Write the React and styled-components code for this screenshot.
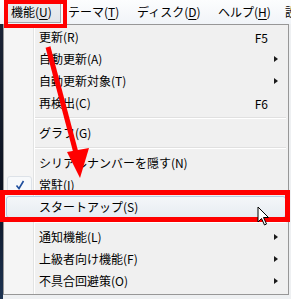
import styled, { createGlobalStyle } from "styled-components";

const GlobalStyle = createGlobalStyle`
  * { box-sizing: border-box; }
  body {
    margin: 0;
    font-family: "Noto Sans CJK JP", "Noto Sans", sans-serif;
    font-size: 12px;
    color: #000;
  }
`;

const Screen = styled.div`
  position: relative;
  width: 291px;
  height: 299px;
  overflow: hidden;
  background: #eef0f2;
`;

const MenuBar = styled.div`
  display: flex;
  height: 24px;
  padding: 2px 0 0 3px;
  background: linear-gradient(#fcfdfe, #f1f4f8);
  white-space: nowrap;
  overflow: hidden;
`;

const BarItem = styled.div`
  flex: none;
  width: ${(p) => p.$w}px;
  height: 21px;
  line-height: 20px;
  padding-left: 7px;
  u { text-decoration: underline; text-underline-offset: 2px; }
`;

const PressedItem = styled(BarItem)`
  margin-left: 4px;
  padding-left: 3px;
  background: linear-gradient(#eceef1, #e2e5e9);
  border: 1px solid #a3a8ae;
  border-top: none;
`;

const Body = styled.div`
  display: flex;
  height: 275px;
`;

const Desktop = styled.div`
  width: 3px;
  background: linear-gradient(#1b2436, #0c1220 60%, #1d3352);
`;

const Panel = styled.div`
  width: 286px;
  height: 271px;
  border: 1px solid #979797;
  padding: 1px 0 2px;
  background: linear-gradient(
    to right,
    #f5f5f5 0 29px,
    #e2e3e3 29px 30px,
    #ffffff 30px 31px,
    #f0f0f0 31px
  );
`;

const Item = styled.div`
  display: grid;
  grid-template-columns: 32px 1fr auto 15px;
  align-items: center;
  height: 22px;
  margin: 0 2px;
  border: 1px solid ${(p) => (p.$hover ? "#b4cbe6" : "transparent")};
  border-radius: 3px;
  background: ${(p) =>
    p.$hover ? "linear-gradient(#f4f6f9, #e7ecf2)" : "transparent"};
  white-space: nowrap;
`;

const Cell = styled.div`
  display: flex;
  align-items: center;
`;

const Label = styled.span`
  line-height: 20px;
`;

const Shortcut = styled.span`
  padding-right: 2px;
`;

const SubArrow = styled.span`
  display: block;
  width: 0;
  height: 0;
  margin-left: 4px;
  border-left: 4px solid #1a1a1a;
  border-top: 3.5px solid transparent;
  border-bottom: 3.5px solid transparent;
`;

const CheckBox = styled.span`
  display: flex;
  align-items: center;
  justify-content: center;
  width: 25px;
  height: 18px;
  border: 1px solid #dde2e8;
  border-radius: 3px;
  background: #f7f9fb;
  color: #1f4f9e;
`;

const Separator = styled.div`
  display: flex;
  align-items: center;
  height: 8px;
  margin: 0 2px 0 31px;
  &::after {
    content: "";
    flex: 1;
    border-top: 1px solid #e0e0e0;
    border-bottom: 1px solid #ffffff;
  }
`;

const RedBox = styled.div`
  position: absolute;
  left: ${(p) => p.$x}px;
  top: ${(p) => p.$y}px;
  width: ${(p) => p.$w}px;
  height: ${(p) => p.$h}px;
  border: ${(p) => p.$t}px solid #ff0000;
`;

const Overlay = styled.svg`
  position: absolute;
  left: 0;
  top: 0;
  pointer-events: none;
`;

const Cursor = styled.svg`
  position: absolute;
  left: 257px;
  top: 206px;
`;

const items = [
  { label: "更新(R)", key: "F5" },
  { label: "自動更新(A)", sub: true },
  { label: "自動更新対象(T)", sub: true },
  { label: "再検出(C)", key: "F6" },
  { sep: true },
  { label: "グラフ(G)" },
  { sep: true },
  { label: "シリアルナンバーを隠す(N)" },
  { label: "常駐(I)", checked: true },
  { label: "スタートアップ(S)", hover: true },
  { sep: true },
  { label: "通知機能(L)", sub: true },
  { label: "上級者向け機能(F)", sub: true },
  { label: "不具合回避策(O)", sub: true },
];

function App() {
  return (
    <Screen>
      <GlobalStyle />
      <MenuBar>
        <PressedItem $w={54}>
          機能(<u>U</u>)
        </PressedItem>
        <BarItem $w={69}>
          テーマ(<u>T</u>)
        </BarItem>
        <BarItem $w={81}>
          ディスク(<u>D</u>)
        </BarItem>
        <BarItem $w={67}>
          ヘルプ(<u>H</u>)
        </BarItem>
        <BarItem $w={60}>設定</BarItem>
      </MenuBar>

      <Body>
        <Desktop />
        <Panel>
          {items.map((it, i) =>
            it.sep ? (
              <Separator key={i} />
            ) : (
              <Item key={i} $hover={it.hover}>
                <Cell>
                  {it.checked && (
                    <CheckBox>
                      <svg width="10" height="10" viewBox="0 0 10 10">
                        <path
                          d="M1.5 5.5 L4 8.5 L8.5 1"
                          fill="none"
                          stroke="#1f4f9e"
                          strokeWidth="1.6"
                        />
                      </svg>
                    </CheckBox>
                  )}
                </Cell>
                <Label>{it.label}</Label>
                <Shortcut>{it.key}</Shortcut>
                <Cell>{it.sub && <SubArrow />}</Cell>
              </Item>
            )
          )}
        </Panel>
      </Body>

      <RedBox $x={4} $y={0} $w={63} $h={28} $t={4} />
      <RedBox $x={0} $y={190} $w={290} $h={32} $t={5} />

      <Overlay width="291" height="299" viewBox="0 0 291 299">
        <line x1="48" y1="47" x2="76" y2="153" stroke="#ff0000" strokeWidth="5" />
        <polygon points="80,178 67,152 89,148" fill="#ff0000" />
      </Overlay>

      <Cursor width="14" height="22" viewBox="0 0 14 22">
        <path
          d="M1 1 L1 16 L4.5 12.5 L7.5 19 L9.5 18 L6.5 11.5 L11.5 11.5 Z"
          fill="#ffffff"
          stroke="#000000"
          strokeWidth="1"
          strokeLinejoin="round"
        />
      </Cursor>
    </Screen>
  );
}

export default App;
